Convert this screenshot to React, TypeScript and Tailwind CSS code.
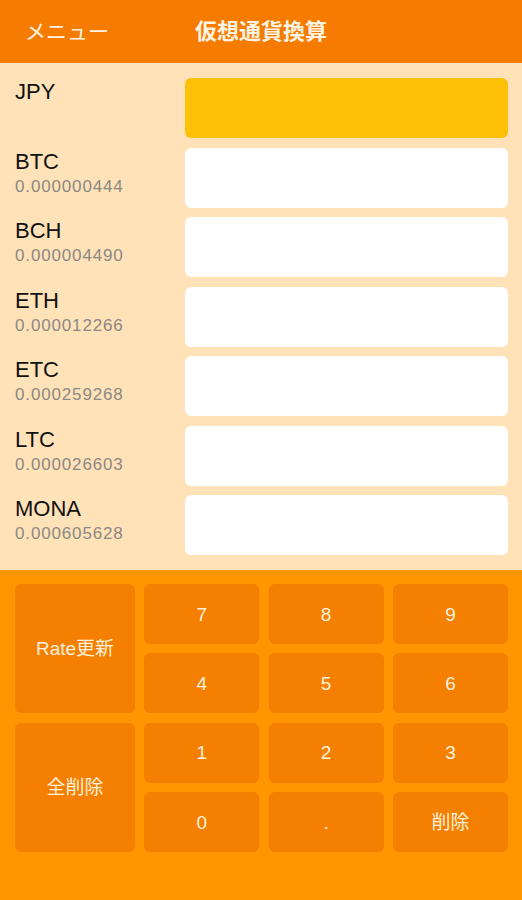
import React from 'react';

const rates = [
    { code: 'JPY', rate: '' },
    { code: 'BTC', rate: '0.000000444' },
    { code: 'BCH', rate: '0.000004490' },
    { code: 'ETH', rate: '0.000012266' },
    { code: 'ETC', rate: '0.000259268' },
    { code: 'LTC', rate: '0.000026603' },
    { code: 'MONA', rate: '0.000605628' },
];

const keyClass =
    'flex items-center justify-center rounded-[6px] bg-[#F57F00] text-[19px] text-[#FFF1DC] pt-[2px]';

export default function App() {
    return (
        <div
            className="flex h-[900px] w-[522px] flex-col bg-[#FF9500]"
            style={{ fontFamily: '"Liberation Sans", "Noto Sans CJK JP", sans-serif' }}
        >
            {/* Header */}
            <div className="grid h-[63px] grid-cols-[1fr_auto_1fr] items-center bg-[#F57C00] text-[#FFF3E3]">
                <div className="pl-[25px] text-[21px]">メニュー</div>
                <div className="text-[22px] font-bold">仮想通貨換算</div>
                <div />
            </div>

            {/* Currency rows */}
            <div className="flex flex-col gap-[9.5px] bg-[#FFE2B8] pb-[15px] pl-[15px] pr-[14px] pt-[15px]">
                {rates.map((r, i) => (
                    <div key={r.code} className="flex h-[60px]">
                        <div className="w-[170px] pt-[2px]">
                            <div className="text-[22px] leading-[24px] text-[#111]">{r.code}</div>
                            {r.rate && (
                                <div className="mt-[3px] text-[17px] leading-[20px] tracking-[0.85px] text-[#8C8882]">
                                    {r.rate}
                                </div>
                            )}
                        </div>
                        <input
                            readOnly
                            className={
                                i === 0
                                    ? 'h-[60px] flex-1 rounded-[6px] bg-[#FFC107] outline-none'
                                    : 'h-[60px] flex-1 rounded-[6px] bg-white outline-none'
                            }
                        />
                    </div>
                ))}
            </div>

            {/* Keypad */}
            <div className="grid grid-cols-[120px_1fr_1fr_1fr] grid-rows-[repeat(4,60px)] gap-x-[9.33px] gap-y-[9.33px] pl-[15px] pr-[14px] pt-[14px]">
                <button className={`${keyClass} row-span-2`}>Rate更新</button>
                <button className={keyClass}>7</button>
                <button className={keyClass}>8</button>
                <button className={keyClass}>9</button>
                <button className={keyClass}>4</button>
                <button className={keyClass}>5</button>
                <button className={keyClass}>6</button>
                <button className={`${keyClass} row-span-2`}>全削除</button>
                <button className={keyClass}>1</button>
                <button className={keyClass}>2</button>
                <button className={keyClass}>3</button>
                <button className={keyClass}>0</button>
                <button className={keyClass}>.</button>
                <button className={keyClass}>削除</button>
            </div>
        </div>
    );
}
